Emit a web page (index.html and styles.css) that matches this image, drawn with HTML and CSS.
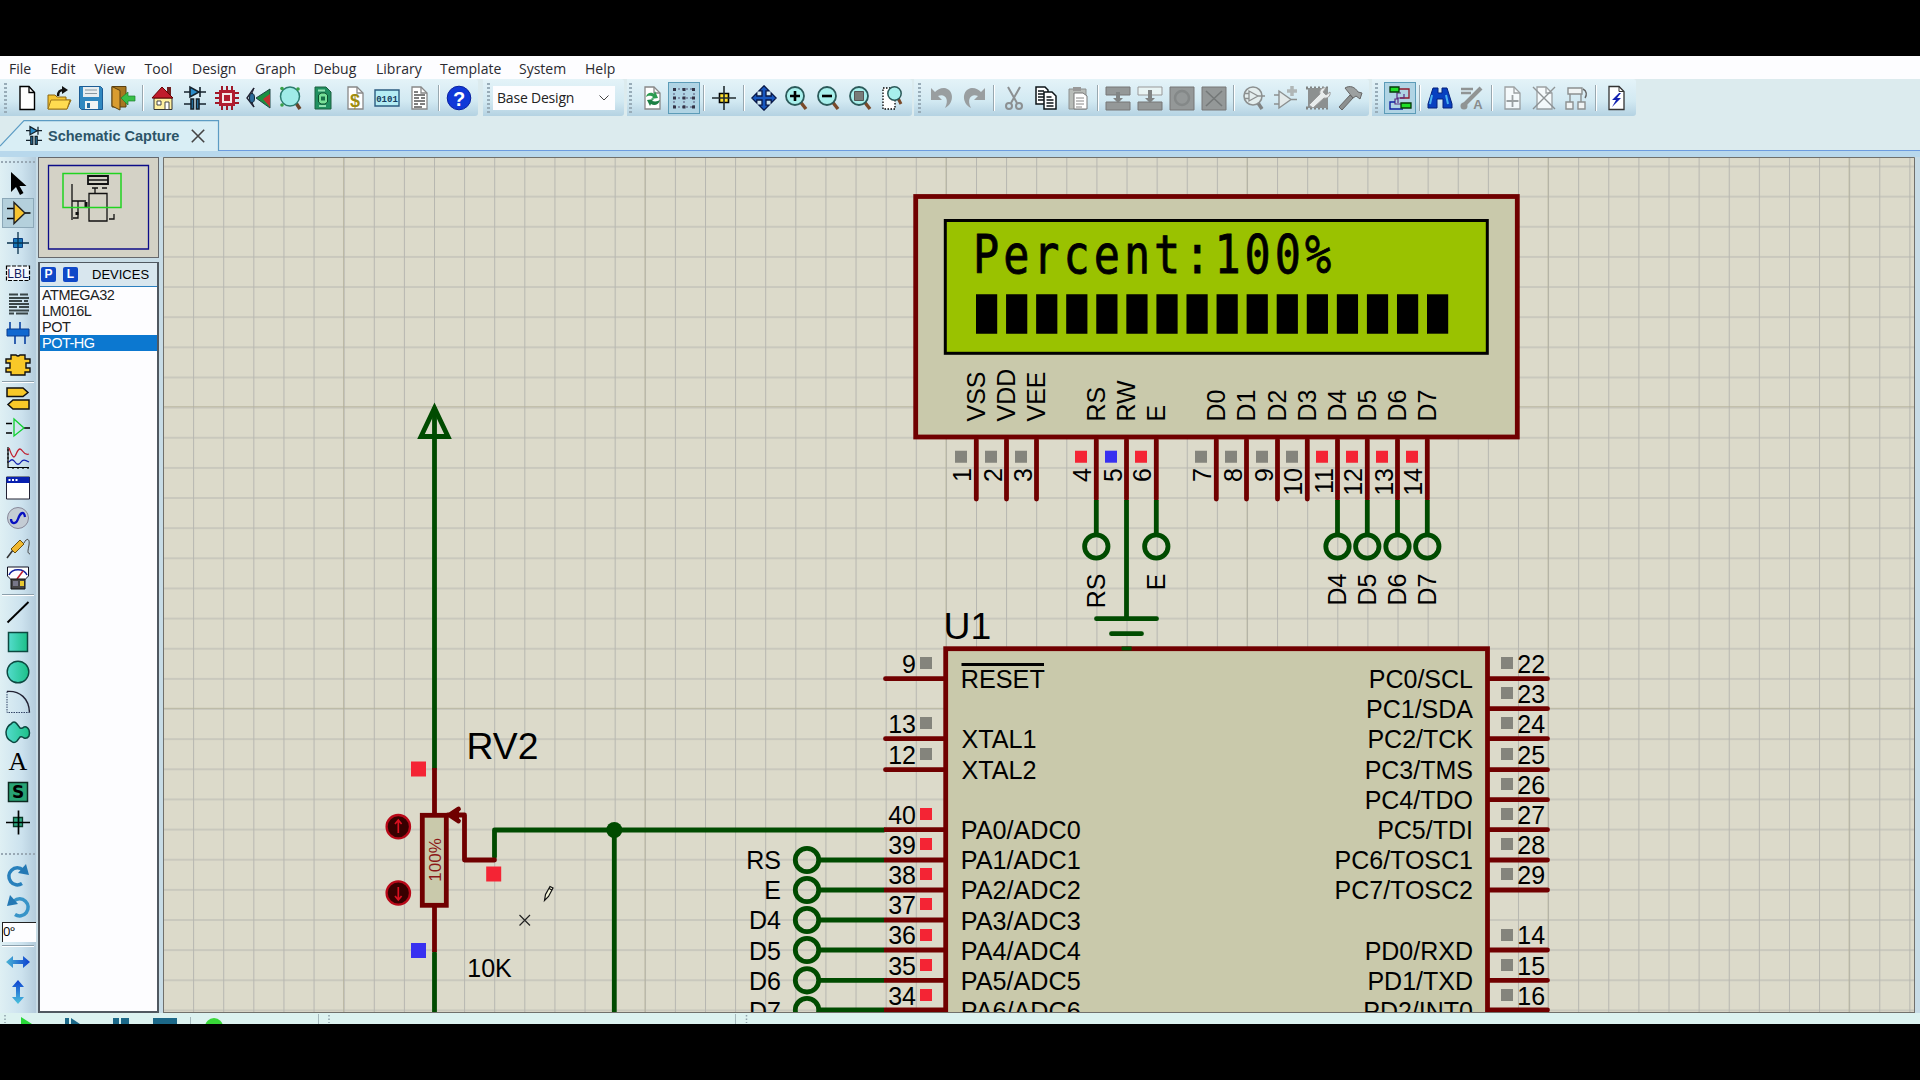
FILE: index.html
```
<!DOCTYPE html>
<html lang="en">
<head>
<meta charset="utf-8">
<title>Schematic Capture</title>
<link rel="stylesheet" href="styles.css">
</head>
<body>
<svg class="defs" width="0" height="0" aria-hidden="true">
  <defs>
    <linearGradient id="blueFade"><stop offset="0" stop-color="#4ab4d4"/><stop offset="1" stop-color="#0c3fd0"/></linearGradient>
    <linearGradient id="blueUp" x1="0" y1="0" x2="0" y2="1"><stop offset="0" stop-color="#0c3fd0"/><stop offset="1" stop-color="#4ac4dc"/></linearGradient>
    <linearGradient id="greenFade"><stop offset="0" stop-color="#54dccc"/><stop offset="1" stop-color="#1cc088"/></linearGradient>
    <symbol id="lens" viewBox="0 0 26 26"><path d="M17.500 17l5.500 7" stroke="#7a4a2a" stroke-width="3.400"/><circle cx="12" cy="11" r="9" fill="#a8f0ec" stroke="#2c5a5a" stroke-width="1.800"/></symbol>
    <symbol id="caps" viewBox="0 0 26 26"><g stroke="#14222c" stroke-width="1.600" fill="none"><path d="M2 7h22M18 2v10M2 19h7M17 19h7"/><path d="M8 2v10l9-5z" fill="#2c8cc8"/><path d="M9 14v10h2.500v-10zM14.500 14v10H17v-10z" fill="#2c8cc8"/></g></symbol>
    <symbol id="sheet" viewBox="0 0 26 26"><path d="M6 2h9l6 6v16H6z" fill="#fff" stroke="#888" stroke-width="1.300"/><path d="M15 2v6h6" fill="none" stroke="#888" stroke-width="1.300"/></symbol>
  </defs>
</svg>
<div class="app">
  <nav class="menu">
    <span>File</span><span>Edit</span><span>View</span><span>Tool</span><span>Design</span><span>Graph</span><span>Debug</span><span>Library</span><span>Template</span><span>System</span><span>Help</span>
  </nav>
  <div class="toolbars">
    <div class="bar bar-file">
      <i class="grip"></i>
      <span class="btn"><svg viewBox="0 0 26 26"><path d="M6 1.500h9l5.500 6V24.500H6z" fill="#fff" stroke="#000" stroke-width="1.400"/><path d="M15 1.500v6h5.500" fill="none" stroke="#000" stroke-width="1.300"/></svg></span>
      <span class="btn"><svg viewBox="0 0 26 26"><path d="M2 10h7l2 2h9v3h5l-4 9H2z" fill="#f4c430" stroke="#8a6410"/><path d="M2 24l3-9h19l-3 9z" fill="#ffdc50" stroke="#a07818"/><path d="M12 11c0-5 2-6 6-6" fill="none" stroke="#111" stroke-width="2.500"/><path d="M16 1l6 4-6 4z" fill="#111"/></svg></span>
      <span class="btn"><svg viewBox="0 0 26 26"><path d="M1.500 1.500h21l2 2v21h-21l-2-2z" fill="#3088c0" stroke="#1c5c94"/><path d="M5 2h16v10H5z" fill="#e8eef0"/><path d="M7 5h12M7 8.500h12" stroke="#8898a0"/><path d="M7 16h13v8H7z" fill="#f0f4f4"/><path d="M9 18h3v5H9z" fill="#246ca0"/></svg></span>
      <span class="btn"><svg viewBox="0 0 26 26"><path d="M2 1.500h14V22H2z" fill="#a87820" stroke="#5a4010"/><path d="M2 1.500l8 4V25l-8-4z" fill="#d89c30" stroke="#5a4010"/><path d="M11 13l7-6v4h7v5h-7v4z" fill="#38c048" stroke="#1c8030" stroke-width=".7"/></svg></span>
      <i class="sep"></i>
      <span class="btn"><svg viewBox="0 0 26 26"><path d="M17 2h4v10h-4z" fill="#702020"/><path d="M4 13h18v11.500H4z" fill="#fff0a0" stroke="#333"/><path d="M2 13L12 2l11 11z" fill="#c01c2c" stroke="#600"/><path d="M7 16h4v4H7z" fill="#fff" stroke="#444"/><path d="M15 17h4v7.500h-4z" fill="#fff" stroke="#444"/></svg></span>
      <span class="btn"><svg viewBox="0 0 26 26"><use href="#caps"/></svg></span>
      <span class="btn"><svg viewBox="0 0 26 26"><path d="M8 1v24M13 1v24M18 1v24M1 8h24M1 13h24M1 18h24" stroke="#a01828" stroke-width="2"/><path d="M5 5h16v16H5z" fill="#b01c30"/><path d="M8 8h10v10H8z" fill="#f4e8e8"/><path d="M10 10h6v6h-6z" fill="#b01c30"/></svg></span>
      <span class="btn"><svg viewBox="0 0 26 26"><path d="M8 3L1 13l7 9" fill="none" stroke="#223" stroke-width="1.400"/><path d="M8 3q-5 10 0 19" fill="none" stroke="#223"/><ellipse cx="6" cy="13" rx="2.500" ry="4.500" fill="#2c6c9c" stroke="#123"/><path d="M10 13L24 4v19z" fill="#1c9040" stroke="#244"/><path d="M17 14l7-5v13z" fill="#c03030"/></svg></span>
      <span class="btn"><svg viewBox="0 0 26 26"><path d="M18 18l4 6" stroke="#6a4428" stroke-width="3.500"/><circle cx="12" cy="11.500" r="9.500" fill="#a0ece8" stroke="#2c7c70" stroke-width="1.500"/><g fill="#38a048"><circle cx="4" cy="3.500" r="1.800"/><circle cx="20" cy="4" r="1.800"/><circle cx="4" cy="20" r="1.800"/></g></svg></span>
      <span class="btn"><svg viewBox="0 0 26 26"><path d="M5 2h11l5 5v17H5z" fill="#209060" stroke="#1c6040"/><path d="M8 5.500h7M9 21h7" stroke="#90e0b0" stroke-width="2"/><path d="M8.500 10l2.500-2h4l2.500 2v7L15 19h-4l-2.500-2z" fill="#78e098" stroke="#0c5030"/><path d="M11 11.500h4v4h-4z" fill="#187048"/></svg></span>
      <span class="btn"><svg viewBox="0 0 26 26"><use href="#sheet"/><text x="13" y="22" class="dollar">$</text></svg></span>
      <span class="btn"><svg viewBox="0 0 26 26"><path d="M1 5h24v16H1z" fill="#b4ecf4" stroke="#2c5c80" stroke-width="1.400"/><text x="13" y="17" class="bits">0101</text></svg></span>
      <span class="btn"><svg viewBox="0 0 26 26"><use href="#sheet"/><path d="M8 7h4M8 10h11M8 13h5m2 0h4M8 16h11M8 19h4m2 0h5M8 22h8" stroke="#555" stroke-width="1.300"/></svg></span>
      <i class="sep"></i>
      <span class="btn"><svg viewBox="0 0 26 26"><circle cx="13" cy="13" r="11.800" fill="#1038d8" stroke="#0820a0"/><text x="13" y="20.500" class="help">?</text></svg></span>
    </div>
    <div class="bar bar-variant"><i class="grip"></i><div class="combo">Base Design<svg viewBox="0 0 10 6"><path d="M.5.5L5 5 9.500.5" fill="none" stroke="#444"/></svg></div></div>
    <div class="bar bar-view">
      <i class="grip"></i>
      <span class="btn"><svg viewBox="0 0 26 26"><use href="#sheet"/><path d="M7 12c1-5 6-5 8-3l1-3 3 7-7 1 2-2c-3-2-5-1-7 0z" fill="#2c9c50"/><path d="M21 15c-1 5-6 6-9 4l-1 2-3-6 7-1-2 2c4 1 6 0 8-1z" fill="#1c8044"/></svg></span>
      <span class="btn on"><svg viewBox="0 0 26 26"><path d="M3 4h20M3 13h20M3 22h20M3 4v18M13 4v18M23 4v18" fill="none" stroke="#557" stroke-dasharray="2 2"/><path d="M2 3h3v3H2zM11.500 3h3v3h-3zM21 3h3v3h-3zM2 11.500h3v3H2zM11.500 11.500h3v3h-3zM21 11.500h3v3h-3zM2 20.500h3v3H2zM11.500 20.500h3v3h-3zM21 20.500h3v3h-3z" fill="#334"/></svg></span>
      <i class="sep"></i>
      <span class="btn"><svg viewBox="0 0 26 26"><path d="M8.500 8.500h9v9h-9z" fill="#ffe030" stroke="#000" stroke-width="1.600"/><path d="M1 13h24M13 1v24" stroke="#222c30" stroke-width="1.600"/></svg></span>
      <i class="sep"></i>
      <span class="btn"><svg viewBox="0 0 26 26"><path d="M13 .8l5 5h-3v5.200h5.200V8l5 5-5 5v-3H15v5.200h3l-5 5-5-5h3V15H5.800v3l-5-5 5-5v3H11V5.800H8z" fill="#1858c0" stroke="#081848" stroke-width="1.300"/></svg></span>
      <span class="btn"><svg viewBox="0 0 26 26"><use href="#lens"/><path d="M7 11h10M12 6v10" stroke="#000" stroke-width="2.600"/></svg></span>
      <span class="btn"><svg viewBox="0 0 26 26"><use href="#lens"/><path d="M7 11h10" stroke="#000" stroke-width="2.600"/></svg></span>
      <span class="btn"><svg viewBox="0 0 26 26"><use href="#lens"/><path d="M7.500 6.500h9v9h-9z" fill="#787c78" stroke="#555"/></svg></span>
      <span class="btn"><svg viewBox="0 0 26 26"><path d="M4 3h12v21H4z" fill="#fff" stroke="#000" stroke-width="1.300" stroke-dasharray="1.500 1.500"/><path d="M19 13l3 6" stroke="#7a4a2a" stroke-width="3"/><circle cx="15.500" cy="8.500" r="6.700" fill="#a8f0ec" stroke="#2c5a5a" stroke-width="1.500"/></svg></span>
    </div>
    <div class="bar bar-edit">
      <i class="grip"></i>
      <span class="btn"><svg viewBox="0 0 26 26"><path d="M2 3v12h11l-4-4c6-3 12 2 7 12 10-5 9-19-1-20-4 0-7 2-9 4z" fill="#999ea0"/></svg></span>
      <span class="btn"><svg viewBox="0 0 26 26"><path d="M24 3v12H13l4-4c-6-3-12 2-7 12C0 18 1 4 11 3c4 0 7 2 9 4z" fill="#999ea0"/></svg></span>
      <i class="sep"></i>
      <span class="btn"><svg viewBox="0 0 26 26"><g fill="none" stroke="#8c9092" stroke-width="2"><path d="M7 2l9 16M19 2l-9 16"/><circle cx="8" cy="21" r="3"/><circle cx="18" cy="21" r="3"/></g></svg></span>
      <span class="btn"><svg viewBox="0 0 26 26"><g fill="#fff" stroke="#0c1418" stroke-width="1.500"><path d="M3 2h9l3 3v14H3z"/><path d="M5 6h6M5 9h7M5 12h7M5 15h7"/><path d="M11 7h8l4 4v13H11z"/><path d="M13.500 12h5M13.500 15h7M13.500 18h7M13.500 21h7"/></g></svg></span>
      <span class="btn"><svg viewBox="0 0 26 26"><path d="M4 4h17v20H4z" fill="#b8bcb8" stroke="#8c9090"/><path d="M8 2h8v4H8z" fill="#999"/><path d="M9 8h9l4 3v13H9z" fill="#fff" stroke="#777"/><path d="M11 13h8M11 16h8M11 19h8M11 22h6" stroke="#888"/></svg></span>
      <i class="sep"></i>
      <span class="btn"><svg viewBox="0 0 26 26"><path d="M1 2h24v8H1zM1 17h24v8H1z" fill="#949898" stroke="#777"/><path d="M11 7h4v6h3l-5 5-5-5h3z" fill="#808484"/></svg></span>
      <span class="btn"><svg viewBox="0 0 26 26"><path d="M1 2h24v8H1z" fill="#e8f4f4" stroke="#999"/><path d="M1 17h24v8H1z" fill="#949898" stroke="#777"/><path d="M11 5h4v8h3l-5 5-5-5h3z" fill="#808484"/></svg></span>
      <span class="btn"><svg viewBox="0 0 26 26"><path d="M1 2h24v23H1z" fill="#949898" stroke="#777"/><circle cx="13" cy="13" r="7" fill="none" stroke="#848888" stroke-width="2.500"/></svg></span>
      <span class="btn"><svg viewBox="0 0 26 26"><path d="M1 2h24v23H1z" fill="#949898" stroke="#777"/><path d="M5 6l16 15M21 6L5 21" stroke="#747878" stroke-width="1.600"/></svg></span>
      <i class="sep"></i>
      <span class="btn"><svg viewBox="0 0 26 26"><path d="M17 18l4 6" stroke="#808484" stroke-width="3.500"/><circle cx="12" cy="11" r="9" fill="#e4eeee" stroke="#8c9090" stroke-width="1.600"/><path d="M8 6v10l9-5zM4 8.500h4M4 13.500h4M17 11h7" fill="none" stroke="#8c9090" stroke-width="1.300"/></svg></span>
      <span class="btn"><svg viewBox="0 0 26 26"><path d="M6 6v17l12-8.500zM1 10h5M1 19h5M18 14.500h6" fill="#e4eaea" stroke="#8c9090" stroke-width="1.400"/><path d="M19 1v10M14 6h10" stroke="#b0b6b6" stroke-width="3.500"/></svg></span>
      <span class="btn"><svg viewBox="0 0 26 26"><path d="M1 3h24M1 23h24" stroke="#808484" stroke-width="3" stroke-dasharray="2 2"/><path d="M3 3h20v20H3z" fill="#8c9090"/><path d="M4 20L15 9c-1-4 2-7 6-6l-3 4 3 3 4-3c1 4-3 7-6 6L8 23z" fill="#e8ecec" stroke="#999"/></svg></span>
      <span class="btn"><svg viewBox="0 0 26 26"><path d="M13 10L2 22l3 3L16 13z" fill="#8c9090" stroke="#666"/><path d="M8 3c5-3 10-1 13 4l4 1-2 6-4-3-3 2-4-5z" fill="#9ca0a0" stroke="#666"/></svg></span>
    </div>
    <div class="bar bar-design">
      <i class="grip"></i>
      <span class="btn on"><svg viewBox="0 0 26 26"><path d="M12 4h10v9h-9" fill="none" stroke="#901828" stroke-width="1.300"/><path d="M14 8h-4v6H8v5h6M17 9v4h-6v5" fill="none" stroke="#5c2c80" stroke-width="1.200"/><path d="M8 17H3v7h13" fill="none" stroke="#1020a0" stroke-width="1.400"/><path d="M3 2h9v5H3zM14 18h10v5H14z" fill="#1ee028" stroke="#063808" stroke-width="1.300"/></svg></span>
      <i class="sep"></i>
      <span class="btn"><svg viewBox="0 0 26 26"><path d="M6 3h5v5h4V3h5l5 16v4h-9v-9h-6v9H1v-4z" fill="#0840c0" stroke="#04207c"/><path d="M5 10L3 19M19 10l2 9" stroke="#48b0f0" stroke-width="2"/></svg></span>
      <span class="btn"><svg viewBox="0 0 26 26"><path d="M2 4h12M2 8h10" stroke="#909494" stroke-width="2.500"/><path d="M22 3L5 20" stroke="#909494" stroke-width="4"/><circle cx="5" cy="21" r="3.500" fill="#909494"/><text x="19" y="24" class="anno">A</text></svg></span>
      <i class="sep"></i>
      <span class="btn"><svg viewBox="0 0 26 26" class="pale"><use href="#sheet"/><path d="M13.500 10v12M7.500 16h12" stroke="#888" stroke-width="1.800"/></svg></span>
      <span class="btn"><svg viewBox="0 0 26 26" class="pale"><use href="#sheet"/><path d="M2 2l22 22M24 2L2 24" stroke="#777" stroke-width="1.400"/></svg></span>
      <span class="btn"><svg viewBox="0 0 26 26"><g fill="#f0f4f4" stroke="#8c9090" stroke-width="1.400"><path d="M5 3h14v6H5zM3 17h7v7H3zM15 17h7v7h-7z"/><path d="M7 9v8M18 9v8" /><path d="M20 4c4 2 4 6 2 9" fill="none" stroke="#666"/></g></svg></span>
      <i class="sep"></i>
      <span class="btn"><svg viewBox="0 0 26 26"><path d="M6 1.500h10l5 5V24.500H6z" fill="#fff" stroke="#333" stroke-width="1.300"/><path d="M16 1.500v5h5" fill="none" stroke="#333"/><path d="M16 8l-7 7h4l-4 7 9-9h-4l4-5z" fill="#1020b0"/></svg></span>
    </div>
  </div>
  <div class="tabs">
    <div class="tab"><svg class="tabshape" viewBox="0 0 220 31"><path d="M0 31V26L24 .7H218.500V31z" fill="#d9eef5"/><path d="M0 26L24 .7H218.500V31" fill="none" stroke="#5c9cc4" stroke-width="1.200"/></svg><svg class="tabicon" viewBox="3 0 20 26"><use href="#caps" width="26" height="26"/></svg><b>Schematic Capture</b><svg class="close" viewBox="0 0 14 14"><path d="M.8.8l12.400 12.400M13.200.8L.8 13.200" stroke="#444" stroke-width="1.600"/></svg></div>
  </div>
  <main class="work">
    <aside class="modes">
      <i class="hgrip"></i>
      <span class="mode"><svg viewBox="0 0 26 26"><path d="M6 2v20l5-5 4 8 3.500-2-4-7h7z" fill="#000"/></svg></span>
      <span class="mode on"><svg viewBox="0 0 26 26"><path d="M2 8.500h7M2 18.500h7M20 13h5.500" stroke="#000" stroke-width="1.300"/><path d="M9 2.500v21L20 13z" fill="#f8c430" stroke="#222" stroke-width="1.400"/></svg></span>
      <span class="mode"><svg viewBox="0 0 26 26"><path d="M8.500 8.500h9v9h-9z" fill="#1878b8" stroke="#0c3c80"/><path d="M2 13h22M13 2v22" stroke="#08304c" stroke-width="1.300"/></svg></span>
      <span class="mode"><svg viewBox="0 0 26 26"><path d="M1.500 6h23v14.500h-23z" fill="#f4f8fc" stroke="#000" stroke-width="1.200" stroke-dasharray="4 1.500"/><text x="13" y="18" class="lbl">LBL</text></svg></span>
      <span class="mode"><svg viewBox="0 0 26 26"><path d="M4 4.500h9m2 0h8M4 8h20M4 11h13m2 0h4M4 14h20M4 17h8m2 0h10M4 20.500h20M4 23.500h5m2 0h12" stroke="#3a4648" stroke-width="1.900"/></svg></span>
      <span class="mode"><svg viewBox="0 0 26 26"><path d="M5 2v8M15 2v8M10 16v8M20 16v8" stroke="#0840a0" stroke-width="1.600"/><path d="M2 9h22v7H2z" fill="#1068d0" stroke="#083c90"/></svg></span>
      <span class="mode m-chip"><svg viewBox="0 0 26 26"><path d="M6 3h5q2 2 4 0h5v4h5v4h-4v5h4v4h-5v3H6v-3H1v-4h4v-5H1V7h5z" fill="#f8c828" stroke="#111" stroke-width="1.400"/></svg></span>
      <i class="hsep"></i>
      <span class="mode"><svg viewBox="0 0 26 26"><path d="M2 3h16l5 4.500-5 4H2zM24 15H8l-5 4.500L8 24h16z" fill="#f8c828" stroke="#111" stroke-width="1.500"/></svg></span>
      <span class="mode"><svg viewBox="0 0 26 26"><path d="M1 8.500h6M1 18h6M19 13h6" stroke="#000" stroke-width="1.500"/><path d="M9 4v17l10-8z" fill="none" stroke="#10d030" stroke-width="1.300"/></svg></span>
      <span class="mode"><svg viewBox="0 0 26 26"><path d="M3 2v20.500h21M2 5h2M2 9h2M2 13h2M2 17h2M8 22v2M13 22v2M18 22v2M23 22v2" fill="none" stroke="#000" stroke-width="1.200"/><path d="M4 3c2 5 3 9 5 9s3-8 6-8 3 7 9 5" fill="none" stroke="#c02030" stroke-width="1.300"/><path d="M4 17c2-3 4-3 6 0s4 3 6 0 4-2 8 0" fill="none" stroke="#1020b0" stroke-width="1.300"/></svg></span>
      <span class="mode"><svg viewBox="0 0 26 26"><path d="M1.500 2h23v22h-23z" fill="#fff" stroke="#223"/><path d="M1.500 2h23v6h-23z" fill="#0820b0"/><path d="M3.500 5h2m1.500 0h2m1.500 0h2" stroke="#fff" stroke-width="2"/></svg></span>
      <span class="mode"><svg viewBox="0 0 26 26"><circle cx="13" cy="13" r="10.500" fill="#c4ccd4" stroke="#889"/><path d="M6 14c0 5 5 6 7 0s6-9 7-2" fill="none" stroke="#0810c0" stroke-width="2.300"/></svg></span>
      <span class="mode"><svg viewBox="0 0 26 26"><path d="M19 8c3-6 6-4 5 2s-2 8 1 9" fill="none" stroke="#444"/><path d="M2 23l6-8" stroke="#333" stroke-width="1.600"/><path d="M6 14L15 5l4 4-9 9z" fill="#f0b830" stroke="#6a5010"/></svg></span>
      <span class="mode"><svg viewBox="0 0 26 26"><path d="M2.500 2h21v9l-4 4h-13l-4-4z" fill="#fff" stroke="#112"/><path d="M4 10C7 3 19 3 22 10" fill="none" stroke="#1020a0" stroke-width="1.500"/><path d="M12 14l6-8" stroke="#c02030" stroke-width="1.500"/><path d="M6 14h14v10H6z" fill="#444" stroke="#111"/><path d="M8 16h5v5H8z" fill="#778"/><path d="M15 16h4v5h-4z" fill="#e8c830"/></svg></span>
      <i class="hsep h4"></i>
      <span class="mode"><svg viewBox="0 0 26 26"><path d="M2.500 23.500L23.500 3" stroke="#000" stroke-width="1.900"/></svg></span>
      <span class="mode"><svg viewBox="0 0 26 26"><path d="M3.500 3.500h19v19h-19z" fill="url(#greenFade)" stroke="#0c4840" stroke-width="1.500"/></svg></span>
      <span class="mode"><svg viewBox="0 0 26 26"><circle cx="13" cy="13" r="10.800" fill="url(#greenFade)" stroke="#0c4840" stroke-width="1.400"/></svg></span>
      <span class="mode"><svg viewBox="0 0 26 26"><path d="M2 2.500v21h22.500" fill="none" stroke="#346" stroke-dasharray="1.500 1"/><path d="M2 2.500c13-1 22 7 22.500 21" fill="none" stroke="#223" stroke-width="1.400"/></svg></span>
      <span class="mode"><svg viewBox="0 0 26 26"><path d="M6 5q3-4 6 0l3 4q2 1 4-1 3-1 5 3 1 3 0 6-2 3-5 2-2-2-4-1l-3 4q-3 3-6 0-5-2-5-9 1-6 5-8z" fill="url(#greenFade)" stroke="#0c4840" stroke-width="1.500"/></svg></span>
      <span class="mode letter">A</span>
      <span class="mode"><svg viewBox="0 0 26 26"><path d="M3.500 3.500h19v19h-19z" fill="#28a474" stroke="#0c2820" stroke-width="1.500"/><text x="13" y="19" class="sym">S</text></svg></span>
      <span class="mode"><svg viewBox="0 0 26 26"><path d="M8.500 8.500h9v9h-9z" fill="#2ca880" stroke="#0c3828" stroke-width="1.300"/><path d="M1 13.500h24M13.500 1.500v24" stroke="#000" stroke-width="1.700"/></svg></span>
      <i class="hgrip wide"></i>
      <span class="mode"><svg viewBox="0 0 26 26"><path d="M17 20.500A8.500 8.500 0 1 1 18 7" fill="none" stroke="#2880bc" stroke-width="3.500"/><path d="M21 1l3 11-11-2z" fill="#2478b4"/></svg></span>
      <span class="mode"><svg viewBox="0 0 26 26"><path d="M10 21.500A8.500 8.500 0 1 0 9 8" fill="none" stroke="#3894c8" stroke-width="3.500"/><path d="M5 2L2 13l11-2z" fill="#2478b4"/></svg></span>
      <div class="angle">0°</div>
      <i class="hsep h3"></i>
      <span class="mode"><svg viewBox="0 0 26 26"><path d="M1 13l7-6v4h10V7l7 6-7 6v-4H8v4z" fill="url(#blueFade)"/></svg></span>
      <span class="mode"><svg viewBox="0 0 26 26"><path d="M13 1l6 7h-4v10h4l-6 7-6-7h4V8H7z" fill="url(#blueUp)"/></svg></span>
    </aside>
    <section class="side">
      <div class="overview">
        <svg viewBox="0 0 118 98"><path d="M9.500 7.500h100v83.500h-100z" fill="none" stroke="#0c0c88" stroke-width="1.300"/><g fill="none" stroke="#111" stroke-width="1.300"><path d="M49 18h20v8H49z" stroke-width="1.800"/><path d="M49 22h20" stroke-width="1.500"/><path d="M50 35.500h18V63H50z"/><path d="M33 26v36M33 43h14M39 43v17h-5M53 30h6m4 0h5M56 30v6M70 61h5v-5"/><path d="M47 44v6M38 54v3" stroke-width="3"/></g><path d="M24 15.500h58v34H24z" fill="none" stroke="#20d420" stroke-width="1.500"/></svg>
      </div>
      <div class="devices">
        <header><b class="key">P</b><b class="key">L</b><span>DEVICES</span></header>
        <ul><li>ATMEGA32</li><li>LM016L</li><li>POT</li><li class="sel">POT-HG</li></ul>
      </div>
    </section>
    <svg class="sheet" viewBox="163 157 1752 856">
      <defs>
        <pattern id="grid" x="434" y="225.800" width="30.110" height="30.140" patternUnits="userSpaceOnUse"><path d="M.5 0v30.140M0 .9h30.110" stroke="#b6b6b0" stroke-width="1" fill="none"/></pattern>
      </defs>
      <rect x="163" y="157" width="1752" height="856" fill="#dcdaca"/>
      <rect x="163" y="157" width="1752" height="856" fill="url(#grid)"/>
      <path d="M163 406.700h1752M163 708.300h1752M343.500 157v856M645 157v856M946 157v856M1247 157v856M1548 157v856M1849 157v856" stroke="#b0ae92" stroke-opacity=".6" fill="none"/>

      <g class="wire">
        <path d="M434.500 409v359M434.500 953v62M494.500 857v-27H884M614.300 830v185"/>
        <path d="M434.500 408l-13.500 28.500h27z" stroke-linejoin="miter"/>
      </g>
      <circle cx="614.300" cy="830" r="8" fill="#004b00"/>

      <rect class="body" x="915.700" y="196.500" width="601.600" height="240.500"/>
      <rect x="945.300" y="220.500" width="542" height="132.800" fill="#9ac200" stroke="#000" stroke-width="3"/>
      <text class="lcd" transform="translate(973 272.500) scale(.82 1)">Percent:100%</text>
      <path d="M976 314h451.500" stroke="#000" stroke-width="39.400" stroke-dasharray="21.200 8.870" pathLength="451.500"/>
      <path d="M1427 314h21.200" stroke="#000" stroke-width="39.400"/>

      <g class="pin">
        <path d="M976.300 440v59M1006.500 440v59M1036.500 440v59M1096.300 440v59M1126.500 440v59M1156.300 440v59M1216.300 440v59M1246.500 440v59M1277.500 440v59M1307.300 440v59M1337.500 440v59M1367.300 440v59M1397.500 440v59M1427.300 440v59"/>
      </g>
      <g class="wire flat">
        <path d="M1096.300 500v34M1156.300 500v34M1126.500 500v118M1337.500 500v34M1367.300 500v34M1397.500 500v34M1427.300 500v34"/>
        <circle cx="1096.300" cy="546.500" r="11.700"/><circle cx="1156.300" cy="546.500" r="11.700"/>
        <circle cx="1337.500" cy="546.500" r="11.700"/><circle cx="1367.300" cy="546.500" r="11.700"/><circle cx="1397.500" cy="546.500" r="11.700"/><circle cx="1427.300" cy="546.500" r="11.700"/>
      </g>
      <path class="wire" d="M1096.500 618.700h60M1111.500 633.700h30"/>

      <path class="gray" d="M955 450.700h12v12h-12zM985 450.700h12v12h-12zM1015 450.700h12v12h-12zM1195 450.700h12v12h-12zM1225 450.700h12v12h-12zM1256 450.700h12v12h-12zM1286 450.700h12v12h-12z"/>
      <path class="red" d="M1075 450.700h12v12h-12zM1135 450.700h12v12h-12zM1316 450.700h12v12h-12zM1346 450.700h12v12h-12zM1376 450.700h12v12h-12zM1406 450.700h12v12h-12z"/>
      <path class="blue" d="M1105 450.700h12v12h-12z"/>

      <g class="t">
        <text transform="translate(985 421.500) rotate(-90)">VSS</text><text transform="translate(1015 421.500) rotate(-90)">VDD</text><text transform="translate(1045 421.500) rotate(-90)">VEE</text>
        <text transform="translate(1105 421.500) rotate(-90)">RS</text><text transform="translate(1135 421.500) rotate(-90)">RW</text><text transform="translate(1165 421.500) rotate(-90)">E</text>
        <text transform="translate(1225 421.500) rotate(-90)">D0</text><text transform="translate(1255 421.500) rotate(-90)">D1</text><text transform="translate(1286 421.500) rotate(-90)">D2</text><text transform="translate(1316 421.500) rotate(-90)">D3</text><text transform="translate(1346 421.500) rotate(-90)">D4</text><text transform="translate(1376 421.500) rotate(-90)">D5</text><text transform="translate(1406 421.500) rotate(-90)">D6</text><text transform="translate(1436 421.500) rotate(-90)">D7</text>
      </g>
      <g class="t end">
        <text transform="translate(971.300 468) rotate(-90)">1</text><text transform="translate(1001.500 468) rotate(-90)">2</text><text transform="translate(1031.500 468) rotate(-90)">3</text><text transform="translate(1091.300 468) rotate(-90)">4</text><text transform="translate(1121.500 468) rotate(-90)">5</text><text transform="translate(1151.300 468) rotate(-90)">6</text><text transform="translate(1211.300 468) rotate(-90)">7</text><text transform="translate(1241.500 468) rotate(-90)">8</text><text transform="translate(1272.500 468) rotate(-90)">9</text><text transform="translate(1302.300 468) rotate(-90)">10</text><text transform="translate(1332.500 468) rotate(-90)">11</text><text transform="translate(1362.300 468) rotate(-90)">12</text><text transform="translate(1392.500 468) rotate(-90)">13</text><text transform="translate(1422.300 468) rotate(-90)">14</text>
        <text transform="translate(1105 573.500) rotate(-90)">RS</text><text transform="translate(1165 573.500) rotate(-90)">E</text><text transform="translate(1346 573.500) rotate(-90)">D4</text><text transform="translate(1376 573.500) rotate(-90)">D5</text><text transform="translate(1406 573.500) rotate(-90)">D6</text><text transform="translate(1436 573.500) rotate(-90)">D7</text>
      </g>

      <text class="t big" x="943.500" y="638.700">U1</text>
      <rect class="body" x="945.700" y="648.700" width="541.800" height="400"/>
      <path d="M1121.600 648.500h10" stroke="#004b00" stroke-width="4"/>
      <path class="pin" d="M885.500 678.700h58M885.500 738.700h58M885.500 769.700h58M1489 678.700h58.500M1489 708.700h58.500M1489 738.700h58.500M1489 769.700h58.500M1489 799.700h58.500M1489 829.700h58.500M1489 860h58.500M1489 890h58.500M1489 950h58.500M1489 980.300h58.500M1489 1010h58.500"/>
      <path class="pin flat" d="M884 829.700h60M884 860h60M884 890h60M884 920h60M884 950h60M884 980.300h60M884 1010h60"/>
      <path class="gray" d="M920 657h12v12h-12zM920 717h12v12h-12zM920 748h12v12h-12zM1501 657h12v12h-12zM1501 687h12v12h-12zM1501 717h12v12h-12zM1501 748h12v12h-12zM1501 778h12v12h-12zM1501 808h12v12h-12zM1501 838h12v12h-12zM1501 868h12v12h-12zM1501 929h12v12h-12zM1501 959h12v12h-12zM1501 989h12v12h-12z"/>
      <path class="red" d="M920 808h12v12h-12zM920 838h12v12h-12zM920 868h12v12h-12zM920 898h12v12h-12zM920 929h12v12h-12zM920 959h12v12h-12zM920 989h12v12h-12z"/>
      <g class="t end">
        <text x="916" y="673">9</text><text x="916" y="733.200">13</text><text x="916" y="764.200">12</text><text x="916" y="824.200">40</text><text x="916" y="854.200">39</text><text x="916" y="884.200">38</text><text x="916" y="914.400">37</text><text x="916" y="944.400">36</text><text x="916" y="974.700">35</text><text x="916" y="1004.700">34</text>
        <text x="1473" y="688">PC0/SCL</text><text x="1473" y="718">PC1/SDA</text><text x="1473" y="748">PC2/TCK</text><text x="1473" y="779">PC3/TMS</text><text x="1473" y="809">PC4/TDO</text><text x="1473" y="839">PC5/TDI</text><text x="1473" y="869.300">PC6/TOSC1</text><text x="1473" y="899.300">PC7/TOSC2</text><text x="1473" y="959.700">PD0/RXD</text><text x="1473" y="989.700">PD1/TXD</text><text x="1473" y="1019.700">PD2/INT0</text>
        <text x="781" y="869.300">RS</text><text x="781" y="899.300">E</text><text x="781" y="929.300">D4</text><text x="781" y="959.500">D5</text><text x="781" y="989.500">D6</text><text x="781" y="1019.500">D7</text>
      </g>
      <path d="M961.500 664.500h82.500" stroke="#000" stroke-width="3"/>
      <g class="t wide">
        <text x="960.800" y="688">RESET</text><text x="961.500" y="748">XTAL1</text><text x="961.500" y="779">XTAL2</text><text x="960.800" y="839.300">PA0/ADC0</text><text x="960.800" y="869.300">PA1/ADC1</text><text x="960.800" y="899.300">PA2/ADC2</text><text x="960.800" y="929.700">PA3/ADC3</text><text x="960.800" y="959.700">PA4/ADC4</text><text x="960.800" y="989.700">PA5/ADC5</text><text x="960.800" y="1019.700">PA6/ADC6</text>
      </g>
      <g class="t">
        <text x="1517.300" y="673">22</text><text x="1517.300" y="703">23</text><text x="1517.300" y="733.200">24</text><text x="1517.300" y="764.200">25</text><text x="1517.300" y="794.200">26</text><text x="1517.300" y="824.200">27</text><text x="1517.300" y="854.200">28</text><text x="1517.300" y="884.200">29</text><text x="1517.300" y="944.400">14</text><text x="1517.300" y="974.700">15</text><text x="1517.300" y="1004.700">16</text>
        <text x="467.300" y="976.700">10K</text>
      </g>
      <g class="wire flat">
        <path d="M819 860h65M819 890h65M819 920h65M819 950h65M819 980.300h65M819 1010h65"/>
        <circle cx="807" cy="860" r="11.700"/><circle cx="807" cy="890" r="11.700"/><circle cx="807" cy="920" r="11.700"/><circle cx="807" cy="950" r="11.700"/><circle cx="807" cy="980.300" r="11.700"/><circle cx="807" cy="1010" r="11.700"/>
      </g>

      <text class="t big" x="466.500" y="759.300">RV2</text>
      <path class="pin flat" d="M434.500 768v47M434.500 905v47"/>
      <rect class="body" x="422.300" y="815.300" width="24" height="90"/>
      <path class="pin" d="M448 815h16.500v45h30M458.500 809l-9 6 9 6"/>
      <path d="M448 815l11-7v14z" fill="#700000"/>
      <text class="pct" transform="translate(440.700 860) rotate(-90)">100%</text>
      <path class="red" d="M411 761.500h15v15h-15zM486.200 866.500h15v15h-15z"/>
      <path class="blue" d="M411 943h15v15h-15z"/>
      <g fill="#380000" stroke="#b80818" stroke-width="2.300"><circle cx="398.300" cy="826.700" r="11.700"/><circle cx="398.300" cy="893" r="11.700"/></g>
      <path d="M398.300 833v-12M395 824l3.300-4 3.300 4M398.300 887v12M395 896l3.300 4 3.300-4" stroke="#d81020" stroke-width="1.700" fill="none"/>
      <path d="M519.500 915l10.500 10.500M530 915l-10.500 10.500" stroke="#222" stroke-width="1.200"/>
      <path d="M544.500 900.500l1-6 4.500-8 3 1.500-4.500 8.500zM549 888.500l3 1.500" fill="#f4f4d8" stroke="#111" stroke-width="1.200"/>
      <path d="M163.500 1013V157.500H1914.500V1013M163 1012.500h1752" stroke="#70706c" fill="none"/>
    </svg>
  </main>
  <footer class="status">
    <svg viewBox="0 0 760 11"><path d="M21 4v7h11z" fill="#28d838"/><path d="M65 5h4v6h-4zM71 5l9 6h-9zM113 5h6v6h-6zM121 5h8v6h-8zM153 5h24v6h-24z" fill="#1c6888"/><path d="M190.500 4v7M318.500 1v10M735.500 1v10" stroke="#a4b8bc"/><path d="M5 2v8M329 2v8M746.500 2v8" stroke="#8ca0a8" stroke-width="1.500" stroke-dasharray="1.500 2"/><circle cx="214" cy="14" r="9" fill="#38d838"/></svg>
  </footer>
</div>
</body>
</html>
```
FILE: styles.css
```
* { box-sizing: border-box; }
body {
  margin: 0;
  height: 1080px;
  padding: 56px 0;
  background: #000;
  overflow: hidden;
  font-family: "Open Sans", "Noto Sans", sans-serif;
  color: #000;
}
.defs { position: absolute; }
.app { height: 968px; display: flex; flex-direction: column; background: #dcebee; overflow: hidden; }

.menu {
  height: 23px;
  padding-left: 9px;
  background: #fdfdff;
  display: grid;
  grid-template-columns: 41.500px 44px 50px 47.500px 63px 58.500px 62.500px 64px 79px 66px 50px;
  font-size: 14px;
  line-height: 25px;
  color: #2a2a30;
}

.toolbars { height: 37px; display: flex; }
.bar {
  height: 37px;
  display: flex;
  align-items: center;
  background: linear-gradient(#e4f3f8, #d2e9f2 60%, #b4d2e2);
  border-radius: 0 3px 3px 0;
}
.bar-file { width: 478px; }
.bar-variant { width: 141px; margin-left: 5px; }
.bar-view { width: 285px; margin-left: 3px; }
.bar-edit { width: 455px; margin-left: 2px; }
.bar-design { width: 264px; margin-left: 3px; }
.grip {
  flex: none;
  width: 3px;
  height: 30px;
  margin: 0 4px 0 4px;
  background: repeating-linear-gradient(#98acb8 0 2px, transparent 2px 4px);
}
.bar-view .grip { margin: 0 4px 0 2px; }
.bar-edit .grip { margin: 0 5px 0 4px; }
.bar-design .grip { margin: 0 6px 0 3px; }
.btn { flex: none; width: 32px; height: 32px; display: flex; align-items: center; justify-content: center; }
.btn svg, .mode svg { width: 26px; height: 26px; }
.btn.on { background: #b0d4e4; border: 1px solid #5c9cb8; }
.sep { flex: none; width: 8px; height: 26px; background: linear-gradient(90deg, transparent 3px, #98a8b0 3px 4px, #fff 4px 5px, transparent 5px); }
.pale { opacity: .75; }
.combo {
  width: 122px;
  height: 24px;
  margin-left: -1px;
  padding: 0 6px 0 4px;
  background: #fdfdff;
  display: flex;
  align-items: center;
  justify-content: space-between;
  font-size: 14px;
  letter-spacing: -.2px;
  color: #222;
}
.combo svg { width: 10px; height: 6px; }
.dollar { font: bold 18px "Liberation Sans", sans-serif; fill: #a08c10; text-anchor: middle; }
.bits { font: bold 9px "Liberation Mono", monospace; fill: #143c60; text-anchor: middle; }
.help { font: bold 20px "Liberation Sans", sans-serif; fill: #fff; text-anchor: middle; }
.anno { font: bold 13px "Liberation Sans", sans-serif; fill: #888c8c; text-anchor: middle; }
.lbl { font: 12px "Liberation Sans", sans-serif; fill: #102060; text-anchor: middle; }
.sym { font: bold 17px "DejaVu Sans", sans-serif; fill: #000; text-anchor: middle; }

.tabs { height: 35px; padding-top: 4px; border-bottom: 1px solid #6c9ce0; display: flex; }
.tab { position: relative; width: 220px; height: 31px; display: flex; align-items: center; padding: 0 15px 0 26px; }
.tab > * { position: relative; }
.tab .tabshape { position: absolute; left: 0; top: 0; width: 220px; height: 31px; }
.tabicon { width: 16px; height: 21px; margin-right: 6px; }
.tab b { font: bold 14.500px "Liberation Sans", sans-serif; color: #2c5468; white-space: nowrap; }
.close { width: 14px; height: 14px; margin-left: auto; }

.work { height: 862px; flex: none; display: flex; padding-top: 6px; background: linear-gradient(#b8d8ec 0 6px, #c8dce6 6px); }
.modes {
  width: 36px;
  background: linear-gradient(90deg, #dff0f4, #cce2ee 60%, #b4ccdc);
  display: flex;
  flex-direction: column;
  align-items: center;
}
.mode { flex: none; width: 32px; height: 30px; display: flex; align-items: center; justify-content: center; }
.mode.on { background: #b4d0dc; border: 1px solid #8ca8b8; }
.m-chip { height: 33px; }
.letter { font: 26px "Liberation Serif", serif; }
.hgrip { flex: none; width: 34px; height: 2px; margin: 4px 0 5px; background: repeating-linear-gradient(90deg, #98a8b4 0 2px, transparent 2px 4px); }
.hgrip.wide { margin: 16px 0 6px; }
.hsep { flex: none; width: 32px; height: 2px; background: #8ca0ac; border-bottom: 1px solid #fff; }
.h4 { height: 2px; margin: 1px 0; }
.angle { flex: none; width: 34px; height: 20px; margin: 1px 0 3px 2px; background: #fdfdff; border: solid #222; border-width: 1px 0 0 1px; font-size: 13px; line-height: 17px; letter-spacing: -.6px; }

.side { width: 123px; padding: 0 0 0 2px; margin-right: 4px; display: flex; flex-direction: column; gap: 4px; }
.overview { height: 101px; background: #d4d2c6; border: 1px solid #66686c; }
.overview svg { width: 118px; height: 98px; display: block; }
.devices { flex: 1; display: flex; flex-direction: column; border: solid #505860; border-width: 1px 2px 2px 2px; }
.devices header { height: 23px; display: flex; align-items: center; gap: 7px; padding-left: 1px; background: #d8e6ee; font: 13px "Liberation Sans", sans-serif; }
.devices header span { margin-left: 7px; }
.key { width: 15px; height: 15px; border-radius: 2px; background: #1048c8; color: #fff; font: bold 12px/15px "Liberation Sans", sans-serif; text-align: center; }
.devices ul { flex: 1; list-style: none; margin: 0; padding: 0; background: #fdfdff; border-top: 1px solid #2c80c0; font: 14.500px/16px "Liberation Sans", sans-serif; letter-spacing: -.5px; color: #222; }
.devices li { height: 16px; padding-left: 2px; }
.devices .sel { background: #0c78d0; color: #fff; }

.sheet { flex: none; width: 1752px; height: 856px; display: block; }
.wire { fill: none; stroke: #004b00; stroke-width: 4.800; stroke-linecap: round; stroke-linejoin: round; }
.pin { fill: none; stroke: #700000; stroke-width: 4.800; stroke-linecap: round; stroke-linejoin: round; }
.flat { stroke-linecap: butt; }
.body { fill: #c9c9ab; stroke: #700000; stroke-width: 4.800; }
.gray { fill: #84847c; }
.red { fill: #f42434; }
.blue { fill: #3830f0; }
.t, .t text { font: 25px "Liberation Sans", Arial, sans-serif; fill: #000; }
.wide text { font-size: 25.200px; }
.end { text-anchor: end; }
.t.big { font-size: 37.300px; }
.lcd { font: 53px "DejaVu Sans Mono", monospace; letter-spacing: 4.900px; fill: #000; stroke: #000; stroke-width: .8px; }
.pct { font: 17px "Liberation Sans", sans-serif; fill: #8c1818; text-anchor: middle; }

.status { height: 11px; flex: none; background: #dcf2f0; }
.status svg { width: 760px; height: 11px; display: block; }
```
